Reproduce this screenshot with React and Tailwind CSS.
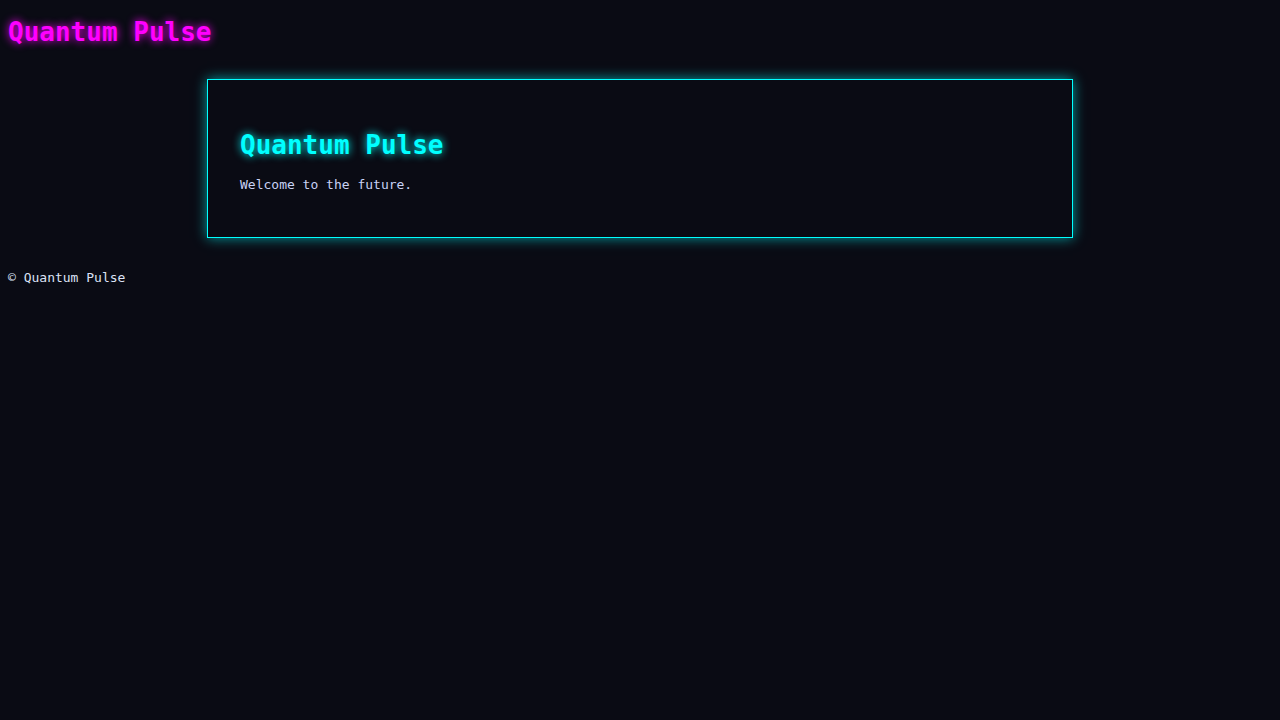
import React from "react";

export default function App() {
    return (
        <div className="min-h-screen bg-[#0a0b14] px-2 pt-[17px] pb-8 font-['DejaVu_Sans_Mono',monospace]">

            {/* Header */}
            <header>
                <h1 className="text-[26px] leading-[30px] font-bold text-[#ff00ff] [text-shadow:0_0_8px_#ff00ff]">
                    Quantum Pulse
                </h1>
            </header>

            {/* Main card */}
            <main className="mt-[32px]">
                <section className="mx-auto w-[866px] border border-[#00ffff] bg-[#0a0b14] px-8 pt-[50px] pb-[45px] shadow-[0_0_12px_#00ffff99]">
                    <h2 className="text-[26px] leading-[30px] font-bold text-[#00ffff] [text-shadow:0_0_8px_#00ffff]">
                        Quantum Pulse
                    </h2>
                    <p className="mt-[17px] text-[13px] leading-[15px] text-[#c8d2f5]">
                        Welcome to the future.
                    </p>
                </section>
            </main>

            {/* Footer */}
            <footer className="mt-8 text-[13px] leading-[15px] text-[#dce2f5]">
                © Quantum Pulse
            </footer>
        </div>
    );
}
